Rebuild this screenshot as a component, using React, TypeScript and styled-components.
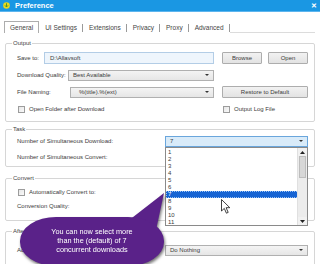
import React from "react";
import styled, { createGlobalStyle } from "styled-components";

const GlobalStyle = createGlobalStyle`
  html, body {
    margin: 0;
    padding: 0;
    background: #ffffff;
  }
  body {
    width: 320px;
    height: 264px;
    overflow: hidden;
  }
`;

const tabs = ["General", "UI Settings", "Extensions", "Privacy", "Proxy", "Advanced"];
const counts = ["1", "2", "3", "4", "5", "6", "7", "8", "9", "10", "11"];

const App = () => {
  return (
    <>
      <GlobalStyle />
      <Window>
        <TitleBar>
          <svg width="7" height="7" viewBox="0 0 7 7">
            <circle cx="3.5" cy="3.5" r="3.3" fill="#e9d81c" />
            <path d="M3.5 1.3 V4.6 M2 3.4 L3.5 5 L5 3.4" stroke="#3f8f2a" strokeWidth="0.9" fill="none" />
          </svg>
          <Title>Preference</Title>
          <Close>✕</Close>
        </TitleBar>

        <Content>
          <TabStrip>
            {tabs.map((t, i) => (
              <Tab key={t} $active={i === 0}>
                {t}
              </Tab>
            ))}
          </TabStrip>

          <Group $top={6} $h={83}>
            <Legend>Output</Legend>
            <OutputGrid>
              <Line>
                <Label $w={27}>Save to:</Label>
                <TextField>D:\Allavsoft</TextField>
              </Line>
              <ButtonPair>
                <Button>Browse</Button>
                <Button>Open</Button>
              </ButtonPair>
              <Line>
                <Label $w={51}>Download Quality:</Label>
                <Combo $pad={4}>
                  Best Available
                  <Caret />
                </Combo>
              </Line>
              <span />
              <Line>
                <Label $w={53}>File Naming:</Label>
                <Combo $pad={8}>
                  %(title).%(ext)
                  <Caret />
                </Combo>
              </Line>
              <Button>Restore to Default</Button>
              <Check>
                <Box />
                Open Folder after Download
              </Check>
              <Check>
                <Box />
                Output Log File
              </Check>
            </OutputGrid>
          </Group>

          <Group $top={3} $h={42}>
            <Legend>Task</Legend>
            <Rows $top={2} $gap={4}>
              <SplitRow>
                <span>Number of Simultaneous Download:</span>
                <Combo $pad={4} $open>
                  7
                  <Caret />
                </Combo>
              </SplitRow>
              <SplitRow>
                <span>Number of Simultaneous Convert:</span>
                <Combo $pad={4}>
                  2
                  <Caret />
                </Combo>
              </SplitRow>
            </Rows>
          </Group>

          <Group $top={7} $h={47}>
            <Legend>Convert</Legend>
            <Rows $top={4} $gap={2}>
              <SplitRow>
                <Check>
                  <Box />
                  Automatically Convert to:
                </Check>
                <Combo $pad={4}>
                  MP4
                  <Caret />
                </Combo>
              </SplitRow>
              <SplitRow>
                <span>Conversion Quality:</span>
                <Combo $pad={4}>
                  Normal
                  <Caret />
                </Combo>
              </SplitRow>
            </Rows>
          </Group>

          <Group $top={6} $h={60}>
            <Legend>After Download</Legend>
            <Rows $top={9} $gap={2}>
              <SplitRow>
                <span>Action:</span>
                <Combo $pad={4}>
                  Do Nothing
                  <Caret />
                </Combo>
              </SplitRow>
            </Rows>
          </Group>
        </Content>

        <DropList>
          {counts.map((c) => (
            <Option key={c} $selected={c === "7"}>
              {c}
            </Option>
          ))}
          <ScrollBar>
            <ScrollButton>
              <svg width="5" height="3" viewBox="0 0 5 3">
                <path d="M0 3 L2.5 0 L5 3 Z" fill="#222" />
              </svg>
            </ScrollButton>
            <Thumb />
            <ScrollButton $bottom>
              <svg width="5" height="3" viewBox="0 0 5 3">
                <path d="M0 0 L2.5 3 L5 0 Z" fill="#222" />
              </svg>
            </ScrollButton>
          </ScrollBar>
        </DropList>

        <Callout>
          <svg width="150" height="80" viewBox="0 0 150 80">
            <path d="M110 33 L146 5 L138 42 Z" fill="#5a2289" />
            <rect x="2" y="29" width="144" height="49" rx="36" ry="24" fill="#5a2289" />
          </svg>
          <CalloutText>
            You can now select more
            <br />
            than the (default) of 7
            <br />
            concurrent downloads
          </CalloutText>
        </Callout>

        <Pointer>
          <svg width="10" height="16" viewBox="0 0 10 16">
            <path
              d="M0.5 0.5 L0.5 12 L3.3 9.4 L5.4 14.2 L7.2 13.4 L5.1 8.7 L8.8 8.7 Z"
              fill="#ffffff"
              stroke="#111"
              strokeWidth="0.8"
              strokeLinejoin="round"
            />
          </svg>
        </Pointer>
      </Window>
    </>
  );
};

export default App;

const Window = styled.div`
  position: relative;
  width: 320px;
  height: 264px;
  overflow: hidden;
  background: #ffffff;
  font-family: "Liberation Sans", Arial, sans-serif;
  font-size: 6px;
  color: #3b3b3b;
`;

const TitleBar = styled.div`
  height: 12px;
  display: flex;
  align-items: center;
  padding: 0 3px 0 3px;
  background: #1a97e3;
  border-bottom: 1px solid #5db5ee;
  box-sizing: border-box;
`;

const Title = styled.div`
  margin-left: 5px;
  color: #ffffff;
  font-weight: 700;
  font-size: 7.5px;
`;

const Close = styled.div`
  margin-left: auto;
  color: #ffffff;
  font-weight: 700;
  font-size: 7px;
`;

const Content = styled.div`
  padding: 9px 5px 0 5px;
`;

const TabStrip = styled.div`
  display: flex;
  height: 12px;
  margin-left: -1px;
  border-bottom: 1px solid #dcdcdc;
  box-sizing: border-box;
`;

const Tab = styled.div<{ $active: boolean }>`
  position: relative;
  padding: 0 5px;
  font-size: 6.5px;
  line-height: 11px;
  color: #444;
  background: #ffffff;
  border: ${({ $active }) => ($active ? "1px solid #adadad" : "1px solid transparent")};
  border-bottom: none;
  height: 12px;
  box-sizing: border-box;
  &::after {
    content: "";
    display: ${({ $active }) => ($active ? "none" : "block")};
    position: absolute;
    right: -1px;
    top: 2px;
    height: 8px;
    border-right: 1px solid #9a9a9a;
  }
`;

const Group = styled.fieldset<{ $top: number; $h: number }>`
  margin: ${({ $top }) => $top}px 0 0 0;
  padding: 0 6px 0 11px;
  height: ${({ $h }) => $h}px;
  box-sizing: border-box;
  border: 1px solid #d6d6d6;
  border-radius: 2px;
  min-width: 0;
`;

const Legend = styled.legend`
  padding: 0 1px;
  margin-left: -5px;
  font-size: 6px;
  line-height: 8px;
  color: #444;
`;

const OutputGrid = styled.div`
  display: grid;
  grid-template-columns: 197px 86px;
  grid-auto-rows: 12px;
  column-gap: 8px;
  row-gap: 5px;
  margin-top: 5px;
`;

const Line = styled.div`
  display: flex;
  align-items: center;
`;

const Label = styled.span<{ $w: number }>`
  width: ${({ $w }) => $w}px;
  flex: none;
`;

const TextField = styled.div`
  flex: 1;
  height: 12px;
  display: flex;
  align-items: center;
  padding-left: 5px;
  box-sizing: border-box;
  background: #eef5fc;
  border: 1px solid #b3cde6;
`;

const Combo = styled.div<{ $pad: number; $open?: boolean }>`
  flex: 1;
  height: 11px;
  display: flex;
  align-items: center;
  padding: 0 4px 0 ${({ $pad }) => $pad}px;
  box-sizing: border-box;
  background: ${({ $open }) => ($open ? "#d9ebf9" : "linear-gradient(#f4f4f4, #e6e6e6)")};
  border: 1px solid ${({ $open }) => ($open ? "#6aa6dc" : "#b0b0b0")};
`;

const Caret = styled.span`
  margin-left: auto;
  width: 0;
  height: 0;
  border-left: 2px solid transparent;
  border-right: 2px solid transparent;
  border-top: 2px solid #333;
`;

const ButtonPair = styled.div`
  display: grid;
  grid-template-columns: 1fr 1fr;
  column-gap: 6px;
`;

const Button = styled.div`
  display: flex;
  align-items: center;
  justify-content: center;
  height: 12px;
  box-sizing: border-box;
  background: linear-gradient(#f2f2f2, #e3e3e3);
  border: 1px solid #adadad;
  border-radius: 1px;
`;

const Check = styled.div`
  display: flex;
  align-items: center;
  gap: 4px;
  margin-left: 1px;
`;

const Box = styled.span`
  width: 7px;
  height: 7px;
  box-sizing: border-box;
  border: 1px solid #9c9c9c;
  background: linear-gradient(135deg, #e6e6e6, #fafafa);
`;

const Rows = styled.div<{ $top: number; $gap: number }>`
  display: flex;
  flex-direction: column;
  gap: ${({ $gap }) => $gap}px;
  margin-top: ${({ $top }) => $top}px;
`;

const SplitRow = styled.div`
  display: grid;
  grid-template-columns: 1fr 143px;
  align-items: center;
  height: 12px;
`;

const DropList = styled.div`
  position: absolute;
  left: 165px;
  top: 147px;
  width: 143px;
  height: 79px;
  box-sizing: border-box;
  padding-top: 1px;
  background: #ffffff;
  border: 1px solid #8a8a8a;
`;

const Option = styled.div<{ $selected: boolean }>`
  height: 7px;
  line-height: 7px;
  width: 133px;
  box-sizing: border-box;
  padding-left: 2px;
  font-size: 6px;
  color: ${({ $selected }) => ($selected ? "#ffffff" : "#3b3b3b")};
  background: ${({ $selected }) => ($selected ? "#1764d3" : "transparent")};
  outline: ${({ $selected }) => ($selected ? "1px dotted #9cc3f5" : "none")};
  outline-offset: -1px;
`;

const ScrollBar = styled.div`
  position: absolute;
  right: 0;
  top: 0;
  bottom: 0;
  width: 9px;
  display: flex;
  flex-direction: column;
  background: #ececec;
  border-left: 1px solid #e0e0e0;
`;

const ScrollButton = styled.div<{ $bottom?: boolean }>`
  height: 8px;
  display: flex;
  align-items: center;
  justify-content: center;
  margin-top: ${({ $bottom }) => ($bottom ? "auto" : "0")};
  background: #f1f1f1;
`;

const Thumb = styled.div`
  height: 22px;
  margin: 0 1px;
  background: #d7d7d7;
  border: 1px solid #bdbdbd;
  box-sizing: border-box;
`;

const Callout = styled.div`
  position: absolute;
  left: 18px;
  top: 188px;
  width: 150px;
  height: 80px;
  filter: drop-shadow(1px 2px 1.5px rgba(0, 0, 0, 0.55));
`;

const CalloutText = styled.div`
  position: absolute;
  left: 2px;
  top: 39px;
  width: 144px;
  text-align: center;
  color: #ffffff;
  font-size: 7.3px;
  line-height: 9px;
`;

const Pointer = styled.div`
  position: absolute;
  left: 221px;
  top: 199px;
  width: 10px;
  height: 16px;
`;
